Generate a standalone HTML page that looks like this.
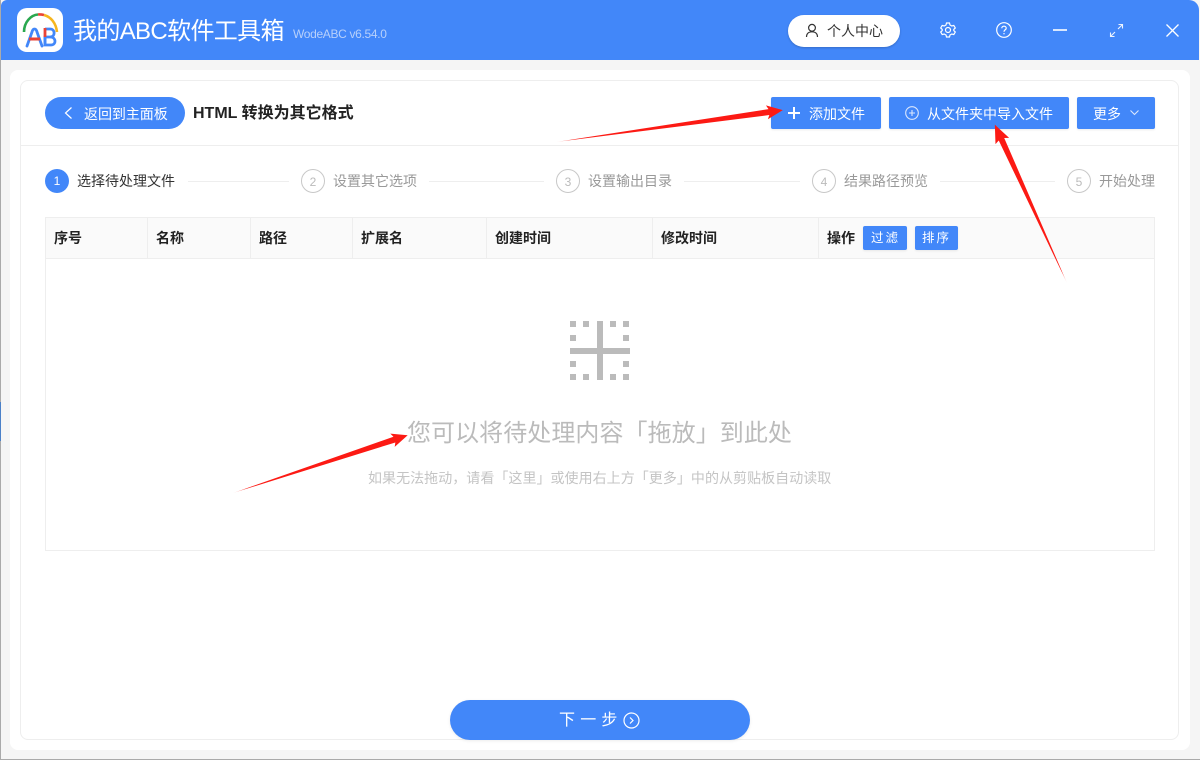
<!DOCTYPE html>
<html lang="zh-CN">
<head>
<meta charset="utf-8">
<title>我的ABC软件工具箱</title>
<style>
*{box-sizing:border-box;margin:0;padding:0}
html,body{width:1200px;height:760px;overflow:hidden;background:#fff}
body{position:relative;font-family:"Liberation Sans","Noto Sans CJK SC",sans-serif;color:#333}
.a{position:absolute}
.t{position:absolute;white-space:nowrap;line-height:20px;height:20px}
.btn{position:absolute;background:#4287f9;border-radius:2px;box-shadow:0 1px 2px rgba(0,0,0,.08)}
.step{color:#999;font-size:14px}
.c{position:absolute;top:169px;width:24px;height:24px;border:1px solid #c8c8c8;border-radius:50%;text-align:center;line-height:24px;font-size:12px;color:#bbb;background:#fff}
.l{position:absolute;top:181px;height:1px;background:#eee}
.h{font-size:14px;font-weight:700;color:#222;top:228px}
.v{position:absolute;top:218px;width:1px;height:41px;background:#eee}
.d{position:absolute;width:6px;height:6px;background:#bbb}
</style>
</head>
<body>
<div class="a" style="left:0;top:0;width:1200px;height:760px;background:#f5f5f5;border-left:1px solid #aaa;border-bottom:1px solid #aaa"></div>
<div class="a" style="left:0;top:402px;width:1px;height:39px;background:#4a80c8"></div>
<div class="a" style="left:1px;top:0;width:1198px;height:60px;background:#4287f9;border-radius:6px 10px 0 0"></div>
<div class="a" style="left:10px;top:70px;width:1180px;height:680px;background:#fff;border-radius:8px"></div>
<div class="a" style="left:20px;top:80px;width:1159px;height:660px;background:#fff;border:1px solid #eee;border-radius:8px"></div>

<svg class="a" style="left:17px;top:8px" width="46" height="44" viewBox="0 0 46 44">
<rect x="0" y="0" width="46" height="44" rx="10" fill="#fff"/>
<path d="M7 24C7 14 14 7 21 6.500" fill="none" stroke="#2aa84f" stroke-width="2.600"/>
<path d="M21 6.500C23 6.300 25 6.500 27 7" fill="none" stroke="#ea4335" stroke-width="2.600"/>
<path d="M27 7C34 9 39 15 40 24" fill="none" stroke="#f6b51e" stroke-width="2.600"/>
<path d="M10 38L15 24C16 20 19 20 20 24L25 38" fill="none" stroke="#4287f9" stroke-width="2.800" stroke-linecap="round"/>
<path d="M12 31H23" stroke="#ea4335" stroke-width="3"/>
<path d="M28 21H33C38.500 21 38.500 29 33 29H28V37H34C39.500 37 39.500 29 33 29" fill="none" stroke="#4287f9" stroke-width="2.800"/>
<path d="M28 20V29" stroke="#ea4335" stroke-width="2.800"/>
<path d="M28 29V38" stroke="#4287f9" stroke-width="2.800"/>
</svg>
<div class="t" style="left:73px;top:20px;font-size:24px;color:#fff;line-height:24px;height:24px;letter-spacing:-.65px">我的ABC软件工具箱</div>
<div class="t" style="left:293px;top:24px;font-size:12px;color:#b7d0fb;letter-spacing:-.33px">WodeABC v6.54.0</div>

<div class="a" style="left:788px;top:15px;width:112px;height:32px;background:#fff;border-radius:16px;box-shadow:0 1px 2px rgba(0,0,0,.2)"></div>
<svg class="a" style="left:805px;top:23px" width="14" height="15" viewBox="0 0 14 15" fill="none" stroke="#333" stroke-width="1.200"><circle cx="7" cy="4.800" r="3.400"/><path d="M1.500 14C1.500 10.500 3.800 8.800 7 8.800S12.500 10.500 12.500 14"/></svg>
<div class="t" style="left:827px;top:21px;font-size:14px;color:#333">个人中心</div>

<svg class="a" style="left:940px;top:22px" width="16" height="16" viewBox="0 0 16 16" fill="none" stroke="#fff" stroke-width="1.200"><path d="M6.500 1H9.500L10 3L11.800 4L13.800 3.400L15.300 6L13.800 7.400V8.600L15.300 10L13.800 12.600L11.800 12L10 13L9.500 15H6.500L6 13L4.200 12L2.200 12.600L.7 10L2.200 8.600V7.400L.7 6L2.200 3.400L4.200 4L6 3Z"/><circle cx="8" cy="8" r="2.500"/></svg>
<svg class="a" style="left:996px;top:22px" width="16" height="16" viewBox="0 0 16 16" fill="none" stroke="#fff" stroke-width="1.200"><circle cx="8" cy="8" r="7.300"/><path d="M5.800 6.200C5.800 3.500 10.200 3.500 10.200 6.200C10.200 7.800 8 7.800 8 9.800"/><path d="M8 11V12.300"/></svg>
<div class="a" style="left:1053px;top:29px;width:14px;height:2px;background:#fff;opacity:.8"></div>
<svg class="a" style="left:1109px;top:23px" width="15" height="15" viewBox="0 0 15 15" fill="none" stroke="#fff" stroke-width="1.100" opacity=".9"><path d="M9.500 1.500H13.500V5.500M13 2L9 6"/><path d="M5.500 13.500H1.500V9.500M2 13L6 9"/></svg>
<svg class="a" style="left:1165px;top:23px" width="15" height="15" viewBox="0 0 15 15" fill="none" stroke="#fff" stroke-width="1.300"><path d="M1.500 1.500L13.500 13.500M13.500 1.500L1.500 13.500"/></svg>

<div class="a" style="left:45px;top:97px;width:140px;height:32px;background:#4287f9;border-radius:16px"></div>
<svg class="a" style="left:63px;top:106px" width="11" height="14" viewBox="0 0 11 14" fill="none" stroke="#fff" stroke-width="1.200"><path d="M8.500 1.500L2.500 7L8.500 12.500"/></svg>
<div class="t" style="left:84px;top:104px;font-size:14px;color:#fff;letter-spacing:-.05px">返回到主面板</div>
<div class="t" style="left:193px;top:104px;font-size:16px;font-weight:700;color:#222">HTML 转换为其它格式</div>

<div class="btn" style="left:771px;top:97px;width:110px;height:32px"></div>
<svg class="a" style="left:787px;top:106px" width="14" height="14" viewBox="0 0 14 14"><path d="M7 1V13M1 7H13" stroke="#fff" stroke-width="2"/></svg>
<div class="t" style="left:809px;top:104px;font-size:14px;color:#fff">添加文件</div>
<div class="btn" style="left:889px;top:97px;width:180px;height:32px"></div>
<svg class="a" style="left:905px;top:106px" width="14" height="14" viewBox="0 0 14 14" fill="none" stroke="#dbe7fd" stroke-width="1.100"><circle cx="7" cy="7" r="6.300"/><path d="M7 4V10M4 7H10"/></svg>
<div class="t" style="left:927px;top:104px;font-size:14px;color:#fff">从文件夹中导入文件</div>
<div class="btn" style="left:1077px;top:97px;width:78px;height:32px"></div>
<div class="t" style="left:1093px;top:104px;font-size:14px;color:#fff">更多</div>
<svg class="a" style="left:1129px;top:109px" width="11" height="8" viewBox="0 0 11 8" fill="none" stroke="#dbe7fd" stroke-width="1.100"><path d="M1.500 1.500L5.500 5.500L9.500 1.500"/></svg>

<div class="a" style="left:21px;top:145px;width:1157px;height:1px;background:#eee"></div>

<div class="a" style="left:45px;top:169px;width:24px;height:24px;border-radius:50%;background:#4287f9;color:#fff;text-align:center;font-size:12px;line-height:24px">1</div>
<div class="t" style="left:77px;top:171px;font-size:14px;color:#333">选择待处理文件</div>
<div class="l" style="left:188px;width:101px"></div>
<div class="c" style="left:301px">2</div>
<div class="t step" style="left:333px;top:171px">设置其它选项</div>
<div class="l" style="left:429px;width:115px"></div>
<div class="c" style="left:556px">3</div>
<div class="t step" style="left:588px;top:171px">设置输出目录</div>
<div class="l" style="left:684px;width:116px"></div>
<div class="c" style="left:812px">4</div>
<div class="t step" style="left:844px;top:171px">结果路径预览</div>
<div class="l" style="left:940px;width:115px"></div>
<div class="c" style="left:1067px">5</div>
<div class="t step" style="left:1099px;top:171px">开始处理</div>

<div class="a" style="left:45px;top:217px;width:1110px;height:334px;border:1px solid #eee;background:#fff"></div>
<div class="a" style="left:46px;top:218px;width:1108px;height:41px;background:#fafafa;border-bottom:1px solid #eee"></div>
<div class="v" style="left:147px"></div>
<div class="v" style="left:250px"></div>
<div class="v" style="left:352px"></div>
<div class="v" style="left:486px"></div>
<div class="v" style="left:652px"></div>
<div class="v" style="left:818px"></div>
<div class="t h" style="left:54px">序号</div>
<div class="t h" style="left:156px">名称</div>
<div class="t h" style="left:259px">路径</div>
<div class="t h" style="left:361px">扩展名</div>
<div class="t h" style="left:495px">创建时间</div>
<div class="t h" style="left:661px">修改时间</div>
<div class="t h" style="left:827px">操作</div>
<div class="btn" style="left:863px;top:226px;width:44px;height:24px"></div>
<div class="t" style="left:871px;top:229px;font-size:12.500px;color:#fff;letter-spacing:2px;line-height:19px">过滤</div>
<div class="btn" style="left:915px;top:226px;width:43px;height:24px"></div>
<div class="t" style="left:922px;top:229px;font-size:12.500px;color:#fff;letter-spacing:2px;line-height:19px">排序</div>

<div class="d" style="left:570px;top:321px"></div><div class="d" style="left:583px;top:321px"></div><div class="d" style="left:610px;top:321px"></div><div class="d" style="left:623px;top:321px"></div>
<div class="d" style="left:570px;top:335px"></div><div class="d" style="left:623px;top:335px"></div>
<div class="d" style="left:570px;top:361px"></div><div class="d" style="left:623px;top:361px"></div>
<div class="d" style="left:570px;top:374px"></div><div class="d" style="left:583px;top:374px"></div><div class="d" style="left:610px;top:374px"></div><div class="d" style="left:623px;top:374px"></div>
<div class="d" style="left:597px;top:321px;height:59px"></div>
<div class="d" style="left:570px;top:348px;width:60px"></div>

<div class="t" style="left:407px;top:418px;font-size:24px;line-height:32px;height:32px;color:#bbb;letter-spacing:.06px">您可以将待处理内容「拖放」到此处</div>
<div class="t" style="left:368px;top:468px;font-size:14px;color:#c4c4c4;letter-spacing:.04px">如果无法拖动，请看「这里」或使用右上方「更多」中的从剪贴板自动读取</div>

<div class="a" style="left:450px;top:700px;width:300px;height:40px;background:#4287f9;border-radius:20px;box-shadow:0 1px 3px rgba(0,0,0,.08)"></div>
<div class="t" style="left:559px;top:711px;font-size:16px;color:#fff;letter-spacing:5.200px">下一步</div>
<svg class="a" style="left:623px;top:712px" width="17" height="17" viewBox="0 0 17 17" fill="none" stroke="#fff" stroke-width="1.200"><circle cx="8.500" cy="8.500" r="7.500"/><path d="M7 5.500L10 8.500L7 11.500"/></svg>

<svg class="a" style="left:0;top:0;pointer-events:none" width="1200" height="760" viewBox="0 0 1200 760">
<defs><linearGradient id="g" x1="0" y1="0" x2="1" y2="0"><stop offset="0" stop-color="#fc1a14" stop-opacity=".1"/><stop offset=".08" stop-color="#fc1a14"/><stop offset="1" stop-color="#fc1a14"/></linearGradient></defs>
<g fill="url(#g)">
<polygon transform="translate(556 142) rotate(-8)" points="0,0 215,-3 213,-7 229,0 213,7 215,3"/>
<polygon transform="translate(1067 283) rotate(-114.500)" points="0,0 158,-3 156,-7.500 174,0 156,7.500 158,3"/>
<polygon transform="translate(233 493) rotate(-18.300)" points="0,0 170,-3 168,-7 184,0 168,7 170,3"/>
</g>
</svg>
</body>
</html>
